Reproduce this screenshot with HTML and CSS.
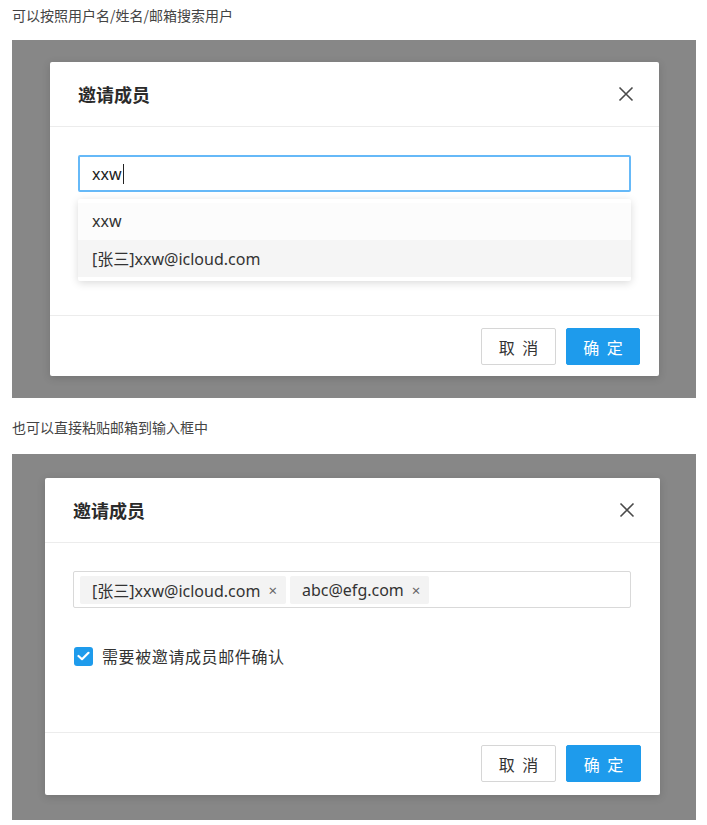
FILE: index.html
```html
<!DOCTYPE html>
<html lang="zh">
<head>
<meta charset="utf-8">
<link rel="stylesheet" href="styles.css">
</head>
<body>
<p class="caption cap1">可以按照用户名/姓名/邮箱搜索用户</p>
<div class="panel panel1">
  <div class="dialog">
    <div class="dlg-head">
      <span class="dlg-title">邀请成员</span>
      <svg class="close" width="16" height="16" viewBox="0 0 16 16"><path d="M1.5 1.5L14.5 14.5M14.5 1.5L1.5 14.5" stroke="#4a4a4a" stroke-width="1.6" fill="none"/></svg>
    </div>
    <div class="dlg-body body1">
      <div class="input focus"><span class="typed">xxw</span><span class="caret"></span></div>
      <div class="dropdown">
        <div class="opt opt-first">xxw</div>
        <div class="opt opt-hover">[张三]xxw@icloud.com</div>
      </div>
    </div>
    <div class="dlg-foot foot1">
      <button class="btn btn-default">取 消</button>
      <button class="btn btn-primary">确 定</button>
    </div>
  </div>
</div>
<p class="caption cap2">也可以直接粘贴邮箱到输入框中</p>
<div class="panel panel2">
  <div class="dialog">
    <div class="dlg-head">
      <span class="dlg-title">邀请成员</span>
      <svg class="close" width="16" height="16" viewBox="0 0 16 16"><path d="M1.5 1.5L14.5 14.5M14.5 1.5L1.5 14.5" stroke="#4a4a4a" stroke-width="1.6" fill="none"/></svg>
    </div>
    <div class="dlg-body body2">
      <div class="input tags">
        <span class="tag">[张三]xxw@icloud.com<span class="tag-x">×</span></span>
        <span class="tag">abc@efg.com<span class="tag-x">×</span></span>
      </div>
      <label class="check">
        <span class="box"><svg width="13" height="10" viewBox="0 0 13 10"><path d="M1.5 5L5 8.2L11.5 1.8" stroke="#fff" stroke-width="2.2" fill="none" stroke-linecap="round" stroke-linejoin="round"/></svg></span>
        <span class="check-label">需要被邀请成员邮件确认</span>
      </label>
    </div>
    <div class="dlg-foot foot2">
      <button class="btn btn-default">取 消</button>
      <button class="btn btn-primary">确 定</button>
    </div>
  </div>
</div>
</body>
</html>
```
FILE: styles.css
```css
* { box-sizing: border-box; }
html, body { margin: 0; padding: 0; background: #fff; }
body {
  padding: 0 11px 0 12px;
  font-family: "Noto Sans", "Noto Sans CJK SC", sans-serif;
  color: #333;
}
.caption {
  margin: 0;
  font-size: 14px;
  line-height: 18px;
  color: #444;
  font-family: "Noto Sans CJK SC", sans-serif;
}
.cap1 { padding-top: 6px; height: 40px; }
.cap2 { padding-top: 20px; height: 56px; }
.panel {
  background: #878787;
  display: flex;
}
.panel1 { height: 358px; padding: 22px 37px 22px 38px; }
.panel2 { height: 366px; padding: 24px 36px 25px 33px; }
.dialog {
  flex: 1;
  background: #fff;
  border-radius: 2px;
  display: flex;
  flex-direction: column;
  box-shadow: 0 2px 8px rgba(0,0,0,0.15);
}
.dlg-head {
  height: 65px;
  flex: none;
  border-bottom: 1px solid #ececec;
  display: flex;
  align-items: center;
  justify-content: space-between;
  padding: 0 25px 0 28px;
}
.dlg-title {
  font-size: 18px;
  font-weight: bold;
  color: #2b2b2b;
  font-family: "Noto Sans CJK SC", sans-serif;
}
.close { display: block; }
.dlg-body {
  flex: 1;
  padding: 28px 28px 0 28px;
}
.body2 { padding-right: 29px; }
.input {
  height: 37px;
  border: 1px solid #d9d9d9;
  border-radius: 2px;
  display: flex;
  align-items: center;
}
.input.focus {
  border: 2px solid #66b9f8;
  padding-left: 12px;
  font-size: 16px;
  color: #222;
}
.caret {
  width: 1px;
  height: 20px;
  background: #222;
  margin-left: 1px;
}
.dropdown {
  margin-top: 7px;
  height: 82px;
  background: #fff;
  padding-top: 4px;
  box-shadow: 0 2px 8px rgba(0,0,0,0.15);
  border-radius: 2px;
}
.opt {
  height: 37px;
  display: flex;
  align-items: center;
  padding-left: 14px;
  font-size: 16px;
  color: #333;
  padding-bottom: 2px;
}
.opt-first { background: #fcfcfc; }
.opt-hover { background: #f5f5f5; }
.tags {
  padding: 0 6px;
  gap: 4px;
}
.tag {
  height: 28px;
  background: #f3f3f3;
  border-radius: 2px;
  display: inline-flex;
  align-items: center;
  padding: 0 9px 0 12px;
  font-size: 16px;
  color: #333;
}
.tag-x {
  margin-left: 8px;
  font-size: 15px;
  color: #666;
}
.check {
  margin-top: 36px;
  display: flex;
  align-items: center;
  gap: 9px;
}
.box {
  width: 19px;
  height: 19px;
  border-radius: 3px;
  background: #1e9bec;
  display: flex;
  align-items: center;
  justify-content: center;
  margin-left: 1px;
}
.check-label {
  font-size: 16px;
  letter-spacing: 0.6px;
  color: #333;
  font-family: "Noto Sans CJK SC", sans-serif;
}
.dlg-foot {
  flex: none;
  height: 61px;
  border-top: 1px solid #ececec;
  display: flex;
  justify-content: flex-end;
  align-items: flex-start;
  padding: 12px 19px 0 0;
  gap: 10px;
}
.foot1 .btn-primary { width: 74px; }
.foot2 { height: 63px; padding-top: 12px; }
.btn {
  height: 37px;
  width: 75px;
  font-size: 16px;
  font-family: "Noto Sans CJK SC", sans-serif;
  border-radius: 2px;
  cursor: pointer;
  letter-spacing: 2px;
  padding: 0 0 0 2px;
}
.btn-default {
  background: #fff;
  border: 1px solid #d6d6d6;
  color: #333;
}
.btn-primary {
  background: #1e9bec;
  border: 1px solid #1e9bec;
  color: #fff;
}
```
